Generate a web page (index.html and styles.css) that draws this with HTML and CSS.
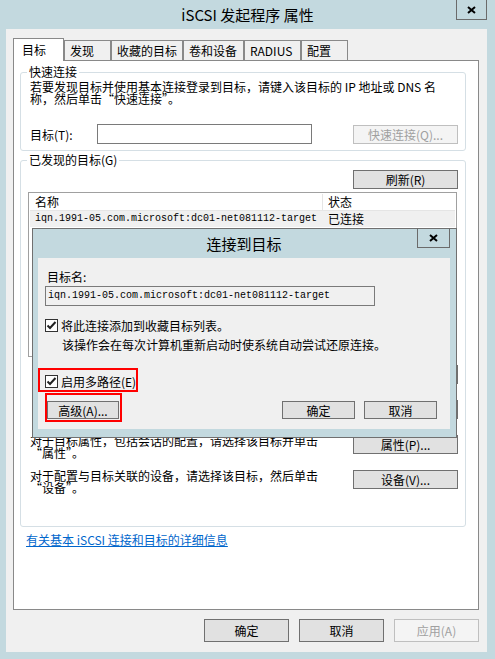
FILE: index.html
```html
<!DOCTYPE html>
<html lang="zh-CN">
<head>
    <meta charset="UTF-8">
    <meta name="viewport" content="width=device-width, initial-scale=1.0">
    <title>iSCSI 发起程序 属性</title>
    <link rel="stylesheet" href="styles.css">
</head>
<body>
    <div class="window">
        <div class="titlebar">
            <div></div>
            <div class="title">iSCSI 发起程序 属性</div>
            <button class="close">
                <svg width="9" height="8" viewBox="0 0 9 8"><path d="M1 1 L8 7 M8 1 L1 7" stroke="#000" stroke-width="2" fill="none"/></svg>
            </button>
        </div>

        <div class="client">
            <div class="tabs">
                <div class="tab active" style="width: 51px">目标</div>
                <div class="tab" style="width: 47px">发现</div>
                <div class="tab" style="width: 72px">收藏的目标</div>
                <div class="tab" style="width: 61px">卷和设备</div>
                <div class="tab" style="width: 57px">RADIUS</div>
                <div class="tab" style="width: 47px">配置</div>
            </div>

            <div class="panel">
                <!-- Quick connect -->
                <fieldset class="group group-quick">
                    <legend>快速连接</legend>
                    <p class="text">若要发现目标并使用基本连接登录到目标，请键入该目标的 IP 地址或 DNS 名<br>称，然后单击“快速连接”。</p>
                    <div class="target-row">
                        <label class="target-label">目标(T):</label>
                        <input class="field" type="text">
                        <button class="btn btn-small" disabled>快速连接(Q)...</button>
                    </div>
                </fieldset>

                <!-- Discovered targets -->
                <fieldset class="group group-found">
                    <legend>已发现的目标(G)</legend>
                    <div class="refresh-row">
                        <button class="btn btn-small">刷新(R)</button>
                    </div>
                    <div class="list">
                        <div class="list-head">
                            <div class="col-name">名称</div>
                            <div class="col-state">状态</div>
                        </div>
                        <div class="list-row">
                            <div class="col-name mono">iqn.1991-05.com.microsoft:dc01-net081112-target</div>
                            <div class="col-state">已连接</div>
                        </div>
                    </div>
                    <!-- these two rows sit under the dialog, only the button edges show -->
                    <div class="action-row">
                        <button class="btn btn-small" aria-label="连接"></button>
                    </div>
                    <div class="action-row">
                        <button class="btn btn-small" aria-label="断开连接"></button>
                    </div>
                    <div class="action-row">
                        <p class="text">对于目标属性，包括会话的配置，请选择该目标并单击<br>“属性”。</p>
                        <button class="btn btn-small">属性(P)...</button>
                    </div>
                    <div class="action-row">
                        <p class="text">对于配置与目标关联的设备，请选择该目标，然后单击<br>“设备”。</p>
                        <button class="btn btn-small">设备(V)...</button>
                    </div>
                </fieldset>

                <a class="link" href="#">有关基本 iSCSI 连接和目标的详细信息</a>
            </div>

            <div class="footer">
                <button class="btn btn-big">确定</button>
                <button class="btn btn-big">取消</button>
                <button class="btn btn-big" disabled>应用(A)</button>
            </div>
        </div>

        <!-- Dialog: connect to target -->
        <div class="dialog">
            <div class="titlebar dialog-bar">
                <div></div>
                <div class="title">连接到目标</div>
                <button class="close dialog-close">
                    <svg width="9" height="8" viewBox="0 0 9 8"><path d="M1 1 L8 7 M8 1 L1 7" stroke="#000" stroke-width="2" fill="none"/></svg>
                </button>
            </div>
            <div class="dialog-client">
                <div class="name-label">目标名:</div>
                <div class="name-field mono">iqn.1991-05.com.microsoft:dc01-net081112-target</div>

                <div class="check-row">
                    <svg class="check" width="13" height="13" viewBox="0 0 13 13"><rect x="0.5" y="0.5" width="12" height="12" fill="#fff" stroke="#333"/><path d="M2.5 6.5 L5 9 L10.5 3" stroke="#222" stroke-width="2" fill="none"/></svg>
                    <span>将此连接添加到收藏目标列表。</span>
                </div>
                <p class="note">该操作会在每次计算机重新启动时使系统自动尝试还原连接。</p>

                <div class="check-row mark mark-multi">
                    <svg class="check" width="13" height="13" viewBox="0 0 13 13"><rect x="0.5" y="0.5" width="12" height="12" fill="#fff" stroke="#333"/><path d="M2.5 6.5 L5 9 L10.5 3" stroke="#222" stroke-width="2" fill="none"/></svg>
                    <span>启用多路径(E)</span>
                </div>

                <div class="dialog-buttons">
                    <div class="mark mark-adv">
                        <button class="btn btn-dialog">高级(A)...</button>
                    </div>
                    <button class="btn btn-dialog btn-right">确定</button>
                    <button class="btn btn-dialog">取消</button>
                </div>
            </div>
        </div>
    </div>
</body>
</html>
```

FILE: styles.css
```css
:root {
    --frame: #c3d9df;
    --client: #f0f0f0;
    --tab-border: #898989;
    --group-border: #d5dfe5;
    --btn-border: #707070;
    --btn-bg: #e1e1e1;
    --link: #0066cc;
    --mark: #ff0000;
}

* {
    box-sizing: border-box;
}

body {
    margin: 0;
    background: var(--frame);
    font-family: "Noto Sans CJK SC", "Noto Sans", sans-serif;
    font-size: 12px;
    color: #000;
}

.mono {
    font-family: "Liberation Mono", monospace;
    font-size: 10px;
}

.window {
    position: relative;
    width: 495px;
    height: 659px;
    display: flex;
    flex-direction: column;
}

.titlebar {
    height: 29px;
    display: grid;
    grid-template-columns: 1fr auto 1fr;
}

.title {
    font-size: 15px;
    line-height: 29px;
}

.close {
    justify-self: end;
    align-self: start;
    width: 31px;
    height: 20px;
    margin-right: 8px;
    padding: 0;
    border: 1px solid #6b6b6b;
    border-top: none;
    background: transparent;
    display: flex;
    align-items: center;
    justify-content: center;
}

.client {
    flex: 1;
    margin: 0 8px 7px 6px;
    padding: 9px 8px 10px 7px;
    background: var(--client);
    display: flex;
    flex-direction: column;
}

/* Tabs */
.tabs {
    display: flex;
    align-items: flex-end;
}

.tab {
    height: 20px;
    padding-left: 5px;
    line-height: 19px;
    border: 1px solid var(--tab-border);
    border-bottom: none;
    white-space: nowrap;
}

.tab.active {
    position: relative;
    z-index: 1;
    height: 23px;
    margin-bottom: -1px;
    padding-left: 8px;
    line-height: 21px;
    background: #fff;
}

.panel {
    flex: 1;
    background: #fff;
    border: 1px solid var(--tab-border);
    padding: 3px 12px 0 6px;
    display: flex;
    flex-direction: column;
}

/* Group boxes */
.group {
    margin: 0;
    min-width: 0;
    border: 1px solid var(--group-border);
    border-radius: 3px;
    padding: 1px 7px 6px 9px;
}

.group legend {
    margin-left: -3px;
    padding: 0 2px;
    line-height: 16px;
}

.group-found {
    margin-top: 1px;
    padding-top: 2px;
    padding-bottom: 32px;
}

.text {
    margin: 0;
    line-height: 12px;
    white-space: nowrap;
}

.target-row {
    display: flex;
    align-items: center;
    height: 20px;
    margin-top: 19px;
}

.target-label {
    width: 67px;
}

.field {
    width: 215px;
    height: 20px;
    margin: 0;
    border: 1px solid #7a7a7a;
    background: #fff;
}

.btn {
    font-family: inherit;
    font-size: 12px;
    color: #000;
    background: var(--btn-bg);
    border: 1px solid var(--btn-border);
    border-radius: 0;
    padding: 0;
    margin: 0;
}

.btn:disabled {
    color: #a0a0a0;
    background: #f4f4f4;
    border-color: #bfbfbf;
}

.btn-small {
    width: 105px;
    height: 19px;
    margin-left: auto;
    flex-shrink: 0;
}

.refresh-row {
    display: flex;
}

/* List view */
.list {
    height: 165px;
    margin: 3px 1px 0 -2px;
    border: 1px solid #a0a0a0;
    padding: 1px;
    background: #fff;
}

.list-head,
.list-row {
    display: flex;
    height: 16px;
    line-height: 16px;
}

.list-head {
    border-bottom: 1px solid #e5e5e5;
    height: 17px;
}

.list-row {
    background: #f0f0f0;
}

.col-name {
    width: 293px;
    padding-left: 5px;
    white-space: nowrap;
}

.list-head .col-name {
    border-right: 1px solid #e5e5e5;
}

.col-state {
    flex: 1;
    padding-left: 5px;
}

.action-row {
    display: flex;
    align-items: flex-start;
    height: 24px;
    margin-top: 11px;
}

.list + .action-row {
    margin-top: 8px;
}

.link {
    margin: 6px 0 0 6px;
    line-height: 14px;
    color: var(--link);
    align-self: flex-start;
}

.footer {
    display: flex;
    justify-content: flex-end;
    gap: 10px;
    margin-top: 9px;
}

.btn-big {
    width: 85px;
    height: 23px;
}

/* Dialog */
.dialog {
    position: absolute;
    left: 32px;
    top: 228px;
    width: 425px;
    height: 210px;
    background: var(--frame);
    border: 1px solid #707070;
    padding: 0 6px 8px 5px;
    display: flex;
    flex-direction: column;
}

.dialog-bar {
    margin-top: -1px;
    height: 30px;
}

.dialog-bar .title {
    line-height: 31px;
}

.dialog-close {
    width: 33px;
    margin-right: 0;
}

.dialog-client {
    flex: 1;
    background: var(--client);
    padding: 12px 13px 0 7px;
    display: flex;
    flex-direction: column;
}

.name-label {
    line-height: 14px;
    padding-left: 2px;
}

.name-field {
    width: 330px;
    height: 20px;
    margin-top: 2px;
    border: 1px solid #7a7a7a;
    padding-left: 2px;
    line-height: 18px;
    white-space: nowrap;
}

.check-row {
    display: flex;
    align-items: center;
    gap: 3px;
    height: 14px;
    margin-top: 12px;
}

.check {
    flex-shrink: 0;
}

.note {
    margin: 6px 0 0 17px;
    line-height: 14px;
}

.mark {
    border: 2px solid var(--mark);
}

.mark-multi {
    align-self: flex-start;
    width: 100px;
    height: 24px;
    margin: 16px 0 0 -7px;
    padding: 3px 0 0 5px;
    white-space: nowrap;
}

.dialog-buttons {
    display: flex;
    align-items: flex-start;
    margin-top: 1px;
}

.mark-adv {
    padding: 6px 1px 1px 0;
}

.btn-dialog {
    width: 73px;
    height: 18px;
}

.dialog-buttons > .btn-dialog {
    margin-top: 8px;
}

.btn-right {
    margin-left: auto;
    margin-right: 9px;
}

.mark-adv .btn-dialog {
    width: 72px;
}
```
